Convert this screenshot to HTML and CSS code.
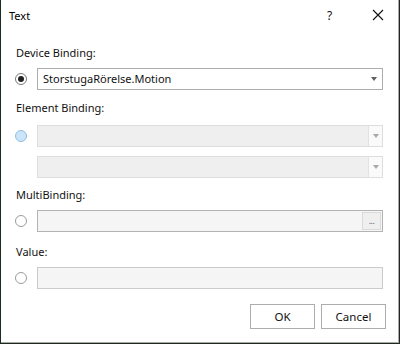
FILE: index.html
```html
<!DOCTYPE html>
<html>
<head>
<meta charset="utf-8">
<link rel="stylesheet" href="styles.css">
</head>
<body>
<div class="window">
  <div class="titlebar">
    <span class="title">Text</span>
    <span class="help">?</span>
    <span class="close">
      <svg width="12" height="12" viewBox="0 0 12 12"><path d="M1 1 L11 11 M11 1 L1 11" stroke="#111" stroke-width="1.1" fill="none"/></svg>
    </span>
  </div>
  <div class="content">
    <div class="label l1">Device Binding:</div>
    <div class="row r1">
      <span class="radio checked"></span>
      <div class="combo">
        <span class="combo-text">StorstugaRörelse.Motion</span>
        <span class="arrow"></span>
      </div>
    </div>

    <div class="label l2">Element Binding:</div>
    <div class="row r2">
      <span class="radio disabled"></span>
      <div class="combo off">
        <span class="combo-text"></span>
        <span class="btn-area"><span class="arrow light"></span></span>
      </div>
    </div>
    <div class="row r3">
      <span class="radio-space"></span>
      <div class="combo off">
        <span class="combo-text"></span>
        <span class="btn-area"><span class="arrow light"></span></span>
      </div>
    </div>

    <div class="label l3">MultiBinding:</div>
    <div class="row r4">
      <span class="radio"></span>
      <div class="textbox multi">
        <span class="dots">...</span>
      </div>
    </div>

    <div class="label l4">Value:</div>
    <div class="row r5">
      <span class="radio"></span>
      <div class="textbox value"></div>
    </div>

    <div class="buttons">
      <button class="button">OK</button>
      <button class="button">Cancel</button>
    </div>
  </div>
</div>
</body>
</html>
```

FILE: styles.css
```css
html, body {
  margin: 0;
  padding: 0;
}
body {
  background: #1f2a1e;
  width: 400px;
  height: 344px;
  overflow: hidden;
  font-family: "Segoe UI", "Noto Sans", "Open Sans", sans-serif;
  font-size: 11px;
  color: #1a1a1a;
}
.window {
  margin-left: 1px;
  width: 398px;
  height: 343px;
  box-sizing: border-box;
  background: #ffffff;
  border-right: 1px solid #a9a9a9;
  border-bottom: 1px solid #a9a9a9;
  display: flex;
  flex-direction: column;
}
.titlebar {
  height: 30px;
  display: flex;
  align-items: center;
  flex-shrink: 0;
}
.title {
  margin-left: 8px;
  color: #000;
  flex: 1;
}
.help {
  width: 12px;
  margin-right: 33px;
  font-size: 12px;
  color: #111;
}
.close {
  width: 12px;
  height: 12px;
  margin-right: 14px;
  display: flex;
}
.content {
  padding: 0 15px 0 14px;
  display: flex;
  flex-direction: column;
}
.label {
  height: 16px;
  line-height: 16px;
  color: #111;
  padding-left: 1px;
}
.l1 { margin-top: 15px; }
.l2 { margin-top: 10px; }
.l3 { margin-top: 9px; }
.l4 { margin-top: 12px; }
.row {
  display: flex;
  align-items: center;
  height: 22px;
}
.r1, .r4, .r5 { margin-top: 7px; }
.r2 { margin-top: 9px; }
.r3 { margin-top: 9px; }
.radio, .radio-space {
  width: 12px;
  height: 12px;
  margin-left: 0;
  margin-right: 10px;
  flex-shrink: 0;
  box-sizing: border-box;
}
.radio {
  border-radius: 50%;
  border: 1px solid #9c9c9c;
  background: #fff;
  position: relative;
}
.radio.checked {
  border-color: #7a7a7a;
}
.radio.checked::after {
  content: "";
  position: absolute;
  left: 2px;
  top: 2px;
  width: 6px;
  height: 6px;
  border-radius: 50%;
  background: #222;
}
.radio.disabled {
  background: #cce4f7;
  border-color: #8fbfe6;
}
.combo {
  flex: 1;
  height: 22px;
  box-sizing: border-box;
  border: 1px solid #adadad;
  background: #fff;
  display: flex;
  align-items: center;
}
.combo-text {
  flex: 1;
  padding-left: 5px;
  color: #111;
  line-height: 18px;
}
.arrow {
  width: 0;
  height: 0;
  border-left: 3.5px solid transparent;
  border-right: 3.5px solid transparent;
  border-top: 4px solid #606060;
  margin-right: 5px;
}
.arrow.light {
  border-top-color: #a8a8a8;
  margin-right: 0;
}
.combo.off {
  border-color: #dedede;
  background: #efefef;
}
.btn-area {
  width: 13px;
  height: 20px;
  border-left: 1px solid #e2e2e2;
  background: #fafafa;
  display: flex;
  align-items: center;
  justify-content: center;
}
.textbox {
  flex: 1;
  height: 22px;
  box-sizing: border-box;
  background: #f5f5f5;
  display: flex;
  align-items: center;
  justify-content: flex-end;
}
.multi {
  border: 1px solid #b3b3b3;
}
.value {
  border: 1px solid #cbcbcb;
}
.dots {
  width: 19px;
  height: 18px;
  box-sizing: border-box;
  margin-right: 1px;
  border: 1px solid #dadada;
  background: #efefef;
  font-size: 9px;
  line-height: 16px;
  text-align: center;
  color: #5a6a80;
  letter-spacing: -0.5px;
}
.buttons {
  margin-top: 15px;
  margin-right: -3px;
  display: flex;
  justify-content: flex-end;
  gap: 6px;
}
.button {
  width: 65px;
  height: 25px;
  box-sizing: border-box;
  border: 1px solid #adadad;
  background: #fff;
  font-family: "Segoe UI", "Noto Sans", "Open Sans", sans-serif;
  font-size: 11.5px;
  color: #111;
  padding: 0;
}
```
